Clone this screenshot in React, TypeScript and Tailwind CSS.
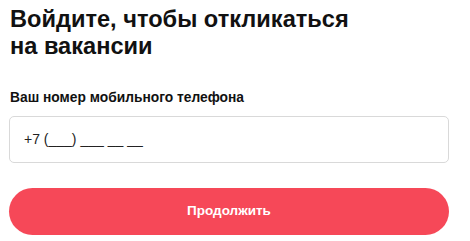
import React from 'react';

export default function App() {
  return (
    <div className="w-[470px] h-[241px] bg-white font-['Liberation_Sans',Arial,sans-serif] text-[#111] overflow-hidden">
      <div className="pl-[10px] pr-[21px] pt-[6px]">
        <h1 className="text-[23.6px] leading-[27px] font-bold">
          Войдите, чтобы откликаться
          <br />
          на вакансии
        </h1>
        <label className="block mt-[30px] text-[13.8px] leading-[16px] font-bold">
          Ваш номер мобильного телефона
        </label>
      </div>
      <div className="px-[9px] pr-[21px] mt-[10px]">
        <div className="h-[47px] border border-[#d9d9d9] rounded-[5px] flex items-center pl-[14px] text-[14px] text-[#222]">
          +7 (___) ___ __ __
        </div>
        <button className="mt-[25px] w-full h-[47px] rounded-full bg-[#f64858] text-white text-[13.5px] font-bold">
          Продолжить
        </button>
      </div>
    </div>
  );
}
